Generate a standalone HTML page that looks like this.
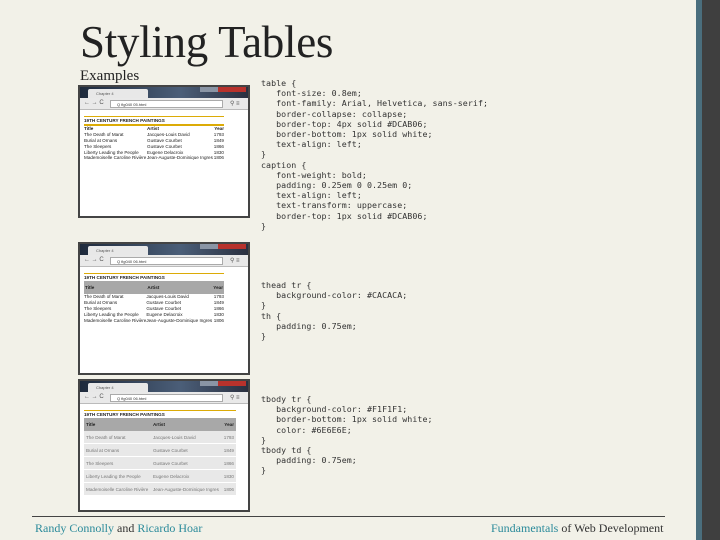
<!DOCTYPE html>
<html><head><meta charset="utf-8"><style>
*{margin:0;padding:0;box-sizing:border-box}
body{width:720px;height:540px;position:relative;background:#f2f1e8;overflow:hidden;font-family:"Liberation Serif",serif}
.abs{position:absolute}
.stripe{left:696px;top:0;width:6px;height:540px;background:#4a6e7d}
.dark{left:702px;top:0;width:18px;height:540px;background:#3f3f3f}
h1{position:absolute;left:80px;top:16px;font-weight:normal;font-size:45px;color:#222;letter-spacing:-0.3px}
.ex{left:80px;top:68px;font-size:15px;color:#222}
.code{left:261px;font-family:"DejaVu Sans Mono",monospace;font-size:8.3px;line-height:10.2px;color:#333;white-space:pre;letter-spacing:0.05px}
.win{left:78px;width:172px;height:133px;background:#2b2b2b;border:2px solid #444;overflow:hidden}
.tb{position:absolute;left:0;top:0;width:100%;height:11px;background:linear-gradient(90deg,#1e2a3c,#4b5e78 60%,#2a3040)}
.tab{position:absolute;left:8px;top:2px;width:60px;height:9px;background:#e8e8e8;border-radius:2px 2px 0 0;font:4px "Liberation Sans",sans-serif;color:#555;padding:2px 0 0 8px}
.wc{position:absolute;right:2px;top:0;width:28px;height:5px;background:#b8322c}
.wc:before{content:"";position:absolute;left:-18px;top:0;width:18px;height:5px;background:#8a95a5}
.tool{position:absolute;left:0;top:11px;width:100%;height:12px;background:#e9e9e9;border-bottom:1px solid #bbb}
.url{position:absolute;left:30px;top:2px;width:113px;height:8px;background:#fff;border:1px solid #aaa;font:4px "Liberation Sans",sans-serif;color:#333;padding:1px 0 0 6px}
.ic{position:absolute;top:2px;font:6px "Liberation Sans",sans-serif;color:#555}
.cont{position:absolute;left:0;top:23px;width:100%;height:108px;background:#fff}
table{position:absolute;left:4px;top:6px;width:140px;border-collapse:collapse;font:4.6px "Liberation Sans",sans-serif;color:#222;text-align:left}
caption{text-align:left;font-weight:bold;padding:1px 0;border-top:1px solid #dcab06}
.t1 table{border-top:2px solid #dcab06}
td,th{padding:0.4px 0;white-space:nowrap}
.y{text-align:right}
.t2 thead tr{background:#a8a8a8}.t2 th{padding:4px 1px}
.t3 thead tr{background:#a8a8a8}.t3 th{padding:4px 2px}
.t3 tbody tr{background:#e8e8e8;color:#777;border-bottom:1px solid #fff}.t3 td{padding:3.5px 2px}
.fl{left:32px;top:516px;width:633px;height:1px;background:#444}
.ft{top:521px;font-size:12px;color:#333}
.tl{color:#2a8a9a}
</style></head><body>
<div class="abs stripe"></div><div class="abs dark"></div>
<h1>Styling Tables</h1>
<div class="abs ex">Examples</div>

<div class="abs code" style="top:78px">table {
   font-size: 0.8em;
   font-family: Arial, Helvetica, sans-serif;
   border-collapse: collapse;
   border-top: 4px solid #DCAB06;
   border-bottom: 1px solid white;
   text-align: left;
}
caption {
   font-weight: bold;
   padding: 0.25em 0 0.25em 0;
   text-align: left;
   text-transform: uppercase;
   border-top: 1px solid #DCAB06;
}</div>
<div class="abs code" style="top:280px">thead tr {
   background-color: #CACACA;
}
th {
   padding: 0.75em;
}</div>
<div class="abs code" style="top:394px">tbody tr {
   background-color: #F1F1F1;
   border-bottom: 1px solid white;
   color: #6E6E6E;
}
tbody td {
   padding: 0.75em;
}</div>

<div class="abs win t1" style="top:85px"><div class="tb"><div class="tab">Chapter 4</div><div class="wc"></div></div>
<div class="tool"><span class="ic" style="left:4px">← → C</span><div class="url">Q fig040 05.html</div><span class="ic" style="left:150px">⚲ ≡</span></div>
<div class="cont"><table><caption>19TH CENTURY FRENCH PAINTINGS</caption>
<thead><tr><th>Title</th><th>Artist</th><th class="y">Year</th></tr></thead>
<tbody><tr><td>The Death of Marat</td><td>Jacques-Louis David</td><td class="y">1793</td></tr>
<tr><td>Burial at Ornans</td><td>Gustave Courbet</td><td class="y">1849</td></tr>
<tr><td>The Sleepers</td><td>Gustave Courbet</td><td class="y">1866</td></tr>
<tr><td>Liberty Leading the People</td><td>Eugene Delacroix</td><td class="y">1830</td></tr>
<tr><td>Mademoiselle Caroline Rivière</td><td>Jean-Auguste-Dominique Ingres</td><td class="y">1806</td></tr></tbody></table></div></div>

<div class="abs win t2" style="top:242px"><div class="tb"><div class="tab">Chapter 4</div><div class="wc"></div></div>
<div class="tool"><span class="ic" style="left:4px">← → C</span><div class="url">Q fig040 06.html</div><span class="ic" style="left:150px">⚲ ≡</span></div>
<div class="cont"><table><caption>19TH CENTURY FRENCH PAINTINGS</caption>
<thead><tr><th>Title</th><th>Artist</th><th class="y">Year</th></tr></thead>
<tbody><tr><td>The Death of Marat</td><td>Jacques-Louis David</td><td class="y">1793</td></tr>
<tr><td>Burial at Ornans</td><td>Gustave Courbet</td><td class="y">1849</td></tr>
<tr><td>The Sleepers</td><td>Gustave Courbet</td><td class="y">1866</td></tr>
<tr><td>Liberty Leading the People</td><td>Eugene Delacroix</td><td class="y">1830</td></tr>
<tr><td>Mademoiselle Caroline Rivière</td><td>Jean-Auguste-Dominique Ingres</td><td class="y">1806</td></tr></tbody></table></div></div>

<div class="abs win t3" style="top:379px"><div class="tb"><div class="tab">Chapter 4</div><div class="wc"></div></div>
<div class="tool"><span class="ic" style="left:4px">← → C</span><div class="url">Q fig040 06.html</div><span class="ic" style="left:150px">⚲ ≡</span></div>
<div class="cont"><table style="width:152px"><caption>19TH CENTURY FRENCH PAINTINGS</caption>
<thead><tr><th>Title</th><th>Artist</th><th class="y">Year</th></tr></thead>
<tbody><tr><td>The Death of Marat</td><td>Jacques-Louis David</td><td class="y">1793</td></tr>
<tr><td>Burial at Ornans</td><td>Gustave Courbet</td><td class="y">1849</td></tr>
<tr><td>The Sleepers</td><td>Gustave Courbet</td><td class="y">1866</td></tr>
<tr><td>Liberty Leading the People</td><td>Eugene Delacroix</td><td class="y">1830</td></tr>
<tr><td>Mademoiselle Caroline Rivière</td><td>Jean-Auguste-Dominique Ingres</td><td class="y">1806</td></tr></tbody></table></div></div>

<div class="abs fl"></div>
<div class="abs ft" style="left:35px"><span class="tl">Randy Connolly</span> and <span class="tl">Ricardo Hoar</span></div>
<div class="abs ft" style="left:491px"><span class="tl">Fundamentals</span> of Web Development</div>
</body></html>
